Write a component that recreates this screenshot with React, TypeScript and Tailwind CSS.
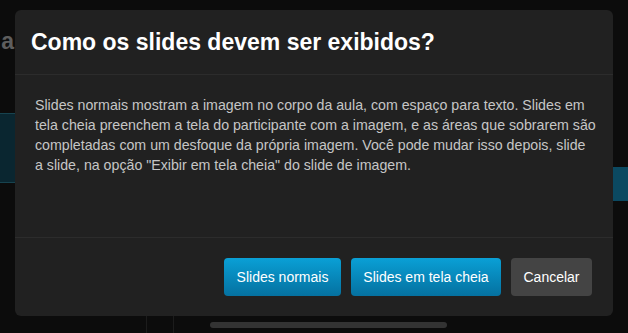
import React from "react";

export default function App() {
  return (
    <div
      className="relative w-[628px] h-[333px] overflow-hidden bg-[#0c0c0c] flex"
      style={{ fontFamily: '"Liberation Sans", Arial, Helvetica, sans-serif' }}
    >
      {/* faded background app, laid out in flow */}
      <div className="w-[15px] shrink-0 flex flex-col overflow-hidden">
        <div className="pt-[26px] h-[113px] flex justify-end">
          <span className="text-[23px] font-bold text-[#5e5e5e] leading-[30px] mr-[1px]">a</span>
        </div>
        <div className="h-[70px] bg-[#0a2630] border-y border-[#17434f]" />
      </div>
      <div className="flex-1 flex flex-col justify-end">
        <div className="h-[17px] flex items-start pl-[131px]">
          <div className="w-px h-full bg-[#1c1c1c]" />
          <div className="w-px h-full bg-[#1c1c1c] ml-[26px]" />
          <div className="w-[237px] h-[6px] mt-[6px] ml-[36px] rounded-full bg-[#333333]" />
        </div>
      </div>
      <div className="w-[15px] shrink-0 pt-[167px]">
        <div className="h-[34px] bg-[#0b4961]" />
      </div>

      {/* modal overlay */}
      <div className="absolute left-[15px] top-[10px] w-[598px] h-[306px] rounded-[6px] bg-[#212121] flex flex-col">
        <div className="h-[65px] shrink-0 flex items-center pl-[16px] border-b border-[#2c2c2c]">
          <h2 className="text-[23px] font-bold text-white leading-none">
            Como os slides devem ser exibidos?
          </h2>
        </div>
        <div className="flex-1 pl-[20px] pr-[17px] pt-[20px] border-b border-[#2c2c2c]">
          <p className="text-[14.2px] leading-[20px] text-[#c6c6c6]">
            Slides normais mostram a imagem no corpo da aula, com espaço para texto. Slides em tela cheia preenchem a tela do participante com a imagem, e as áreas que sobrarem são completadas com um desfoque da própria imagem. Você pode mudar isso depois, slide a slide, na opção "Exibir em tela cheia" do slide de imagem.
          </p>
        </div>
        <div className="h-[78px] shrink-0 flex items-center justify-end pr-[21px] gap-[10px]">
          <button className="h-[38px] w-[117px] rounded-[4px] bg-gradient-to-b from-[#0aa0d6] to-[#0571a0] text-white text-[14px]">
            Slides normais
          </button>
          <button className="h-[38px] w-[150px] rounded-[4px] bg-gradient-to-b from-[#0aa0d6] to-[#0571a0] text-white text-[14px]">
            Slides em tela cheia
          </button>
          <button className="h-[38px] w-[81px] rounded-[4px] bg-[#444444] text-white text-[14px]">
            Cancelar
          </button>
        </div>
      </div>
    </div>
  );
}
